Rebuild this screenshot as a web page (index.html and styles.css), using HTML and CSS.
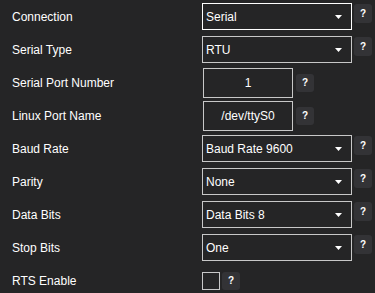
FILE: index.html
```
<!DOCTYPE html>
<html>
<head>
	<title>Serial Settings</title>
	<link rel="stylesheet" href="styles.css">
</head>
<body>
	<div id="settings">
		<div class="row">
			<span class="label">Connection</span>
			<div class="ctl">
				<div class="combo focused"><span>Serial</span><svg class="arrow" width="7" height="4" viewBox="0 0 7 4"><path d="M0 0H7L3.5 4Z" fill="#fff"/></svg></div>
				<span class="help top">?</span>
			</div>
		</div>
		<div class="row">
			<span class="label">Serial Type</span>
			<div class="ctl">
				<div class="combo"><span>RTU</span><svg class="arrow" width="7" height="4" viewBox="0 0 7 4"><path d="M0 0H7L3.5 4Z" fill="#fff"/></svg></div>
				<span class="help top">?</span>
			</div>
		</div>
		<div class="row">
			<span class="label">Serial Port Number</span>
			<div class="ctl">
				<div class="textbox">1</div>
				<span class="help">?</span>
			</div>
		</div>
		<div class="row">
			<span class="label">Linux Port Name</span>
			<div class="ctl">
				<div class="textbox">/dev/ttyS0</div>
				<span class="help">?</span>
			</div>
		</div>
		<div class="row">
			<span class="label">Baud Rate</span>
			<div class="ctl">
				<div class="combo"><span>Baud Rate 9600</span><svg class="arrow" width="7" height="4" viewBox="0 0 7 4"><path d="M0 0H7L3.5 4Z" fill="#fff"/></svg></div>
				<span class="help top">?</span>
			</div>
		</div>
		<div class="row">
			<span class="label">Parity</span>
			<div class="ctl">
				<div class="combo"><span>None</span><svg class="arrow" width="7" height="4" viewBox="0 0 7 4"><path d="M0 0H7L3.5 4Z" fill="#fff"/></svg></div>
				<span class="help top">?</span>
			</div>
		</div>
		<div class="row">
			<span class="label">Data Bits</span>
			<div class="ctl">
				<div class="combo"><span>Data Bits 8</span><svg class="arrow" width="7" height="4" viewBox="0 0 7 4"><path d="M0 0H7L3.5 4Z" fill="#fff"/></svg></div>
				<span class="help top">?</span>
			</div>
		</div>
		<div class="row">
			<span class="label">Stop Bits</span>
			<div class="ctl">
				<div class="combo"><span>One</span><svg class="arrow" width="7" height="4" viewBox="0 0 7 4"><path d="M0 0H7L3.5 4Z" fill="#fff"/></svg></div>
				<span class="help top">?</span>
			</div>
		</div>
		<div class="row">
			<span class="label">RTS Enable</span>
			<div class="ctl">
				<div class="check"></div>
				<span class="help">?</span>
			</div>
		</div>
	</div>
</body>
</html>
```

FILE: styles.css
```
body {
	margin: 0;
	background: #252526;
	color: #fff;
	font-family: "Liberation Sans", Arial, sans-serif;
	font-size: 12px;
}
#settings {
	display: flex;
	flex-direction: column;
}
.row {
	display: flex;
	align-items: center;
	height: 33px;
}
.label {
	width: 190px;
	padding-left: 12px;
}
.ctl {
	display: flex;
	align-items: center;
	align-self: stretch;
}
.combo {
	box-sizing: border-box;
	width: 150px;
	height: 27px;
	border: 1px solid #c8c8c8;
	display: flex;
	align-items: center;
	justify-content: space-between;
	padding: 0 9px 0 3px;
}
.combo.focused {
	border-color: #fff;
}
.arrow {
	display: block;
}
.textbox {
	box-sizing: border-box;
	width: 90px;
	height: 30px;
	margin-left: 1px;
	border: 1px solid #c8c8c8;
	display: flex;
	align-items: center;
	justify-content: center;
}
.check {
	box-sizing: border-box;
	width: 18px;
	height: 18px;
	border: 1px solid #c8c8c8;
}
.help {
	width: 18px;
	height: 18px;
	margin-left: 3px;
	background: #333336;
	border-radius: 3px;
	font-size: 10px;
	font-weight: bold;
	display: flex;
	align-items: center;
	justify-content: center;
}
.help.top {
	align-self: flex-start;
	margin-top: 4px;
	margin-left: 2px;
	height: 19px;
}
.check + .help {
	margin-left: 2px;
}
```
